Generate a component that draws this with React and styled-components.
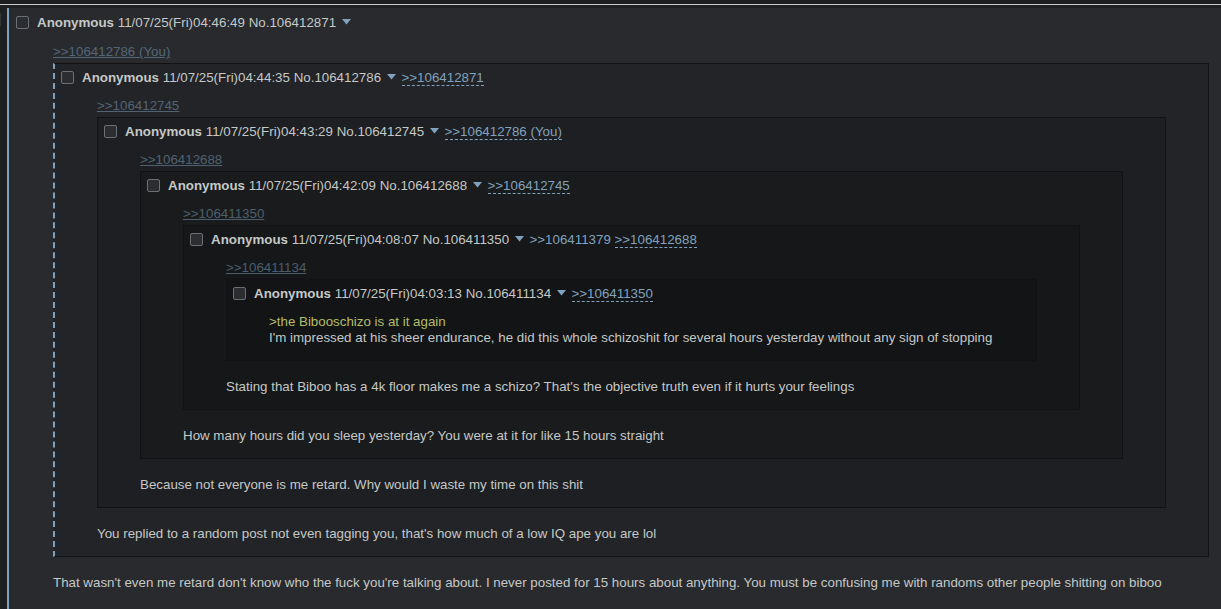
import React from 'react';
import styled, { createGlobalStyle } from 'styled-components';

const GlobalStyle = createGlobalStyle`
  html, body {
    margin: 0;
    background: #1d1f21;
    overflow: hidden;
  }
  body {
    font-family: "Liberation Sans", Arial, sans-serif;
    font-size: 10pt;
    color: #c5c8c6;
  }
`;

const Top = styled.div`
  height: 4px;
`;

const Rule = styled.div`
  height: 1px;
  background: #c9cbcc;
  margin-bottom: 3px;
`;

const Row = styled.div`
  display: flex;
`;

const Gutter = styled.div`
  width: 7px;
  flex-shrink: 0;
`;

const Stub = styled.div`
  width: 1px;
  height: 13px;
  margin-top: 5px;
  background: #34363b;
`;

const Thread = styled.div`
  flex: 1;
  min-width: 0;
`;

const PostBox = styled.div`
  background: ${p => (p.$root ? '#282a2e' : 'rgba(0, 0, 0, 0.13)')};
  border: ${p => (p.$root ? '0' : '1px solid #111214')};
  border-left: ${p =>
    p.$root ? '2px solid #81a2be' : p.$dashed ? '2px dashed #81a2be' : '1px solid #111214'};
  padding: ${p => (p.$root ? '6px 4px 9px 4px' : '5px 4px 5px 2px')};
  margin: ${p => (p.$root ? '0' : '3px 0 18px')};
`;

const Header = styled.div`
  height: 17px;
  line-height: 17px;
  white-space: nowrap;
`;

const Check = styled.span`
  display: inline-block;
  width: 11px;
  height: 11px;
  border: 1px solid #6c6f74;
  border-radius: 2px;
  background: #2b2d31;
  vertical-align: -2px;
  margin: 0 8px 0 ${p => (p.$root ? '3px' : '4px')};
`;

const Name = styled.span`
  font-weight: bold;
  color: #c5c8c6;
`;

const Caret = styled.svg`
  display: inline-block;
  width: 9px;
  height: 6px;
  margin: 0 2px;
  vertical-align: 2px;
`;

const Backlink = styled.a`
  color: #81a2be;
  text-decoration: none;
  border-bottom: ${p => (p.$dashed ? '1px dashed #81a2be' : 'none')};
  line-height: 14px;
  display: inline-block;
`;

const Quote = styled.blockquote`
  margin: ${p => (p.$root ? '13px 8px 9px 40px' : '12px 38px 9px 40px')};
  line-height: 16px;
`;

const QuoteLine = styled.div`
  height: 16px;
  white-space: nowrap;
`;

const InlinedLink = styled.a`
  color: #81a2be;
  opacity: 0.5;
  text-decoration: underline;
`;

const Line = styled.div`
  color: ${p => (p.$green ? '#b5bd68' : '#c5c8c6')};
  white-space: nowrap;
`;

const thread = {
  no: '106412871',
  date: '11/07/25(Fri)04:46:49',
  backlinks: [],
  quote: '>>106412786 (You)',
  body: [
    "That wasn't even me retard don't know who the fuck you're talking about. I never posted for 15 hours about anything. You must be confusing me with randoms other people shitting on biboo",
  ],
  inline: {
    no: '106412786',
    date: '11/07/25(Fri)04:44:35',
    dashed: true,
    backlinks: [{ text: '>>106412871', dashed: true }],
    quote: '>>106412745',
    body: [
      "You replied to a random post not even tagging you, that's how much of a low IQ ape you are lol",
    ],
    inline: {
      no: '106412745',
      date: '11/07/25(Fri)04:43:29',
      backlinks: [{ text: '>>106412786 (You)', dashed: true }],
      quote: '>>106412688',
      body: ['Because not everyone is me retard. Why would I waste my time on this shit'],
      inline: {
        no: '106412688',
        date: '11/07/25(Fri)04:42:09',
        backlinks: [{ text: '>>106412745', dashed: true }],
        quote: '>>106411350',
        body: ['How many hours did you sleep yesterday? You were at it for like 15 hours straight'],
        inline: {
          no: '106411350',
          date: '11/07/25(Fri)04:08:07',
          backlinks: [
            { text: '>>106411379', dashed: false },
            { text: '>>106412688', dashed: true },
          ],
          quote: '>>106411134',
          body: [
            "Stating that Biboo has a 4k floor makes me a schizo? That's the objective truth even if it hurts your feelings",
          ],
          inline: {
            no: '106411134',
            date: '11/07/25(Fri)04:03:13',
            backlinks: [{ text: '>>106411350', dashed: true }],
            body: [
              { green: true, text: '>the Bibooschizo is at it again' },
              "I'm impressed at his sheer endurance, he did this whole schizoshit for several hours yesterday without any sign of stopping",
            ],
          },
        },
      },
    },
  },
};

const Post = ({ post, root }) => (
  <PostBox $root={root} $dashed={post.dashed}>
    <Header>
      <Check $root={root} />
      <Name>Anonymous</Name> <span>{post.date}</span> <span>No.{post.no}</span>{' '}
      <Caret viewBox="0 0 9 6">
        <polygon points="0,0 9,0 4.5,5.5" fill="#81a2be" />
      </Caret>
      {post.backlinks.map((b, i) => (
        <React.Fragment key={i}>
          {' '}
          <Backlink $dashed={b.dashed}>{b.text}</Backlink>
        </React.Fragment>
      ))}
    </Header>
    <Quote $root={root}>
      {post.quote && (
        <QuoteLine>
          <InlinedLink>{post.quote}</InlinedLink>
        </QuoteLine>
      )}
      {post.inline && <Post post={post.inline} />}
      {post.body.map((l, i) =>
        typeof l === 'string' ? (
          <Line key={i}>{l}</Line>
        ) : (
          <Line key={i} $green={l.green}>
            {l.text}
          </Line>
        )
      )}
    </Quote>
  </PostBox>
);

export default function App() {
  return (
    <>
      <GlobalStyle />
      <Top />
      <Rule />
      <Row>
        <Gutter>
          <Stub />
        </Gutter>
        <Thread>
          <Post post={thread} root />
        </Thread>
      </Row>
    </>
  );
}
